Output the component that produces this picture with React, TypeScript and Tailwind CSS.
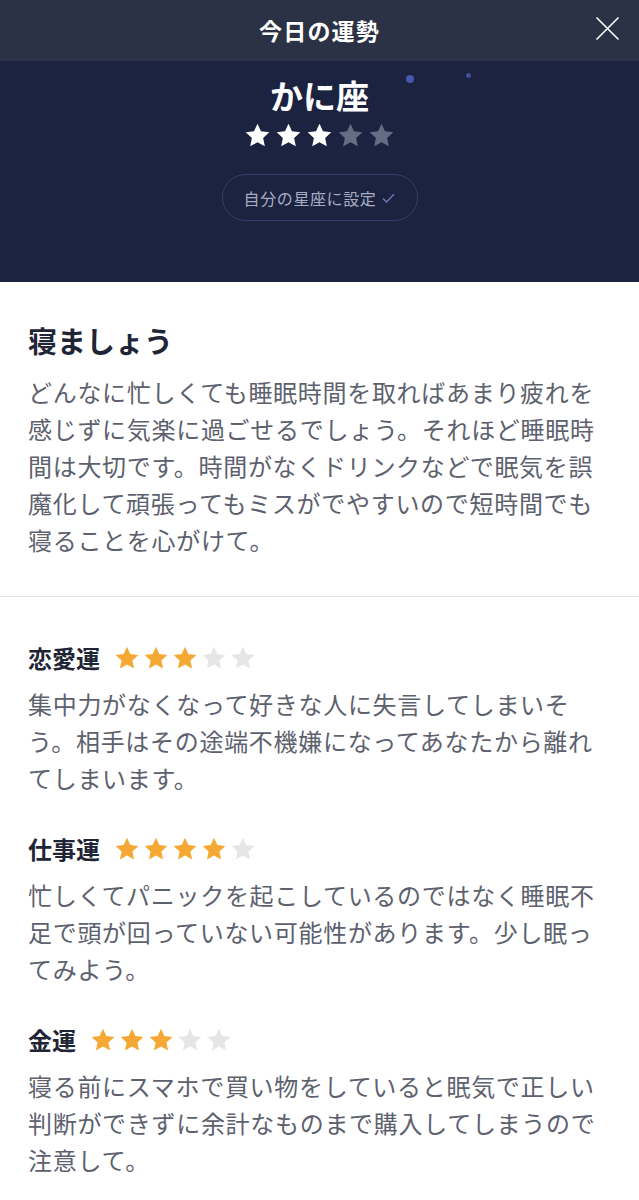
import { Fragment } from 'react';

const FONT = { fontFamily: '"Noto Sans CJK JP", "Noto Sans", sans-serif' };

const STAR_POINTS = '12,1.5 15.1,8.3 22.5,9.2 17,14.3 18.5,21.6 12,17.9 5.5,21.6 7,14.3 1.5,9.2 8.9,8.3';

function Stars({
  value,
  size,
  gap,
  on,
  off,
}: {
  value: number;
  size: number;
  gap: string;
  on: string;
  off: string;
}) {
  return (
    <div className={`flex items-center ${gap}`}>
      {[0, 1, 2, 3, 4].map((i) => (
        <svg key={i} width={size} height={size} viewBox="0 0 24 24">
          <polygon points={STAR_POINTS} fill={i < value ? on : off} />
        </svg>
      ))}
    </div>
  );
}

const SUMMARY = [
  'どんなに忙しくても睡眠時間を取ればあまり疲れを',
  '感じずに気楽に過ごせるでしょう。それほど睡眠時',
  '間は大切です。時間がなくドリンクなどで眠気を誤',
  '魔化して頑張ってもミスがでやすいので短時間でも',
  '寝ることを心がけて。',
];

const FORTUNES = [
  {
    label: '恋愛運',
    stars: 3,
    lines: [
      '集中力がなくなって好きな人に失言してしまいそ',
      'う。相手はその途端不機嫌になってあなたから離れ',
      'てしまいます。',
    ],
  },
  {
    label: '仕事運',
    stars: 4,
    lines: [
      '忙しくてパニックを起こしているのではなく睡眠不',
      '足で頭が回っていない可能性があります。少し眠っ',
      'てみよう。',
    ],
  },
  {
    label: '金運',
    stars: 3,
    lines: [
      '寝る前にスマホで買い物をしていると眠気で正しい',
      '判断ができずに余計なものまで購入してしまうので',
      '注意して。',
    ],
  },
];

function Lines({ lines }: { lines: string[] }) {
  return (
    <p className="whitespace-nowrap text-[24px] leading-[37px] tracking-[0.7px] text-[#5d616e]">
      {lines.map((l, i) => (
        <Fragment key={i}>
          {l}
          {i < lines.length - 1 && <br />}
        </Fragment>
      ))}
    </p>
  );
}

export default function App() {
  return (
    <div style={FONT} className="min-h-[1200px] w-[639px] overflow-hidden bg-white">
      {/* top bar */}
      <header className="relative flex h-[61px] items-center justify-center bg-[#2b3245]">
        <h1 className="text-[23px] font-bold tracking-[1.2px] text-white">今日の運勢</h1>
        <button className="absolute right-[19px] top-[16px] h-[25px] w-[25px]">
          <svg viewBox="0 0 25 25" width="25" height="25" fill="none" stroke="#ffffff" strokeWidth="1.6">
            <path d="M1.5 1.5 L23.5 23.5 M23.5 1.5 L1.5 23.5" />
          </svg>
        </button>
      </header>

      {/* sign hero */}
      <section className="relative flex flex-col items-center bg-[#1b2341] pb-[61px] pt-[14px]">
        <span className="absolute left-[406px] top-[14px] h-[8px] w-[8px] rounded-full bg-[#4658ad]" />
        <span className="absolute left-[466px] top-[12px] h-[5px] w-[5px] rounded-full bg-[#3f4f99]" />
        <h2 className="text-[33px] font-bold leading-[40px] text-white">かに座</h2>
        <div className="mt-[7px]">
          <Stars value={3} size={27} gap="gap-[4px]" on="#ffffff" off="#656d84" />
        </div>
        <button className="mt-[25px] flex h-[47px] w-[196px] items-center justify-center gap-[6px] rounded-full border border-[#34406b] text-[16px] tracking-[0.6px] text-[#a7adc0]">
          <span>自分の星座に設定</span>
          <svg width="13" height="10" viewBox="0 0 13 10" fill="none" stroke="#6d7ab3" strokeWidth="1.4">
            <path d="M1 5.5 L4.5 9 L12 1.2" />
          </svg>
        </button>
      </section>

      {/* daily summary */}
      <section className="border-b border-[#e4e4e4] px-[28px] pb-[38px] pt-[40px]">
        <h3 className="text-[29px] font-bold leading-[37px] text-[#1f2536]">寝ましょう</h3>
        <div className="mt-[14px]">
          <Lines lines={SUMMARY} />
        </div>
      </section>

      {/* category fortunes */}
      <div className="flex flex-col gap-[38px] px-[28px] pt-[46px]">
        {FORTUNES.map((f) => (
          <section key={f.label}>
            <div className="flex h-[30px] items-center gap-[14px]">
              <h4 className="text-[24px] font-bold text-[#1f2536]">{f.label}</h4>
              <Stars value={f.stars} size={26} gap="gap-[3px]" on="#f5a834" off="#e6e6e6" />
            </div>
            <div className="mt-[12px]">
              <Lines lines={f.lines} />
            </div>
          </section>
        ))}
      </div>
    </div>
  );
}
